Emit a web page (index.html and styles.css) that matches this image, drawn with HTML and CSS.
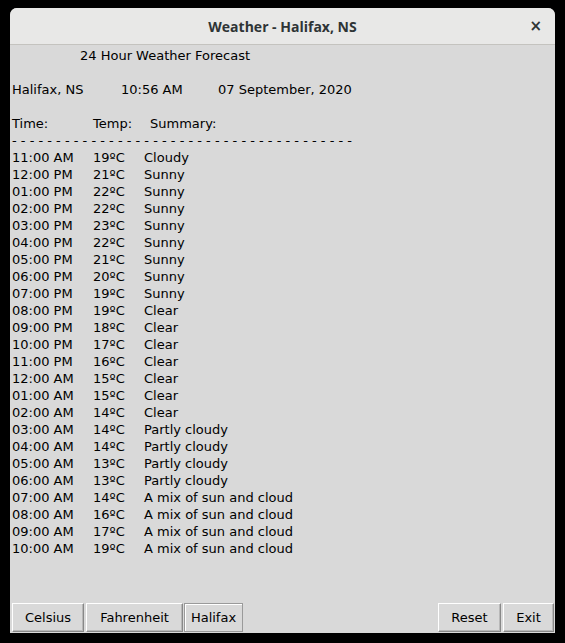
FILE: index.html
```html
<!DOCTYPE html>
<html>
<head>
<meta charset="utf-8">
<title>Weather - Halifax, NS</title>
<link rel="stylesheet" href="styles.css">
</head>
<body>
<div class="window">
  <div class="titlebar">
    <span class="title">Weather - Halifax, NS</span>
    <span class="close">×</span>
  </div>
  <div class="content">
    <div class="line heading">24 Hour Weather Forecast</div>
    <div class="line"></div>
    <div class="line info"><span class="c-loc">Halifax, NS</span><span class="c-time">10:56 AM</span><span>07 September, 2020</span></div>
    <div class="line"></div>
    <div class="line hdr"><span class="c-t">Time:</span><span class="c-h2">Temp:</span><span>Summary:</span></div>
    <div class="line dashes">- - - - - - - - - - - - - - - - - - - - - - - - - - - - - - - - - - - - - - -</div>
    <div class="line row"><span class="c-t">11:00 AM</span><span class="c-d">19ºC</span><span>Cloudy</span></div>
    <div class="line row"><span class="c-t">12:00 PM</span><span class="c-d">21ºC</span><span>Sunny</span></div>
    <div class="line row"><span class="c-t">01:00 PM</span><span class="c-d">22ºC</span><span>Sunny</span></div>
    <div class="line row"><span class="c-t">02:00 PM</span><span class="c-d">22ºC</span><span>Sunny</span></div>
    <div class="line row"><span class="c-t">03:00 PM</span><span class="c-d">23ºC</span><span>Sunny</span></div>
    <div class="line row"><span class="c-t">04:00 PM</span><span class="c-d">22ºC</span><span>Sunny</span></div>
    <div class="line row"><span class="c-t">05:00 PM</span><span class="c-d">21ºC</span><span>Sunny</span></div>
    <div class="line row"><span class="c-t">06:00 PM</span><span class="c-d">20ºC</span><span>Sunny</span></div>
    <div class="line row"><span class="c-t">07:00 PM</span><span class="c-d">19ºC</span><span>Sunny</span></div>
    <div class="line row"><span class="c-t">08:00 PM</span><span class="c-d">19ºC</span><span>Clear</span></div>
    <div class="line row"><span class="c-t">09:00 PM</span><span class="c-d">18ºC</span><span>Clear</span></div>
    <div class="line row"><span class="c-t">10:00 PM</span><span class="c-d">17ºC</span><span>Clear</span></div>
    <div class="line row"><span class="c-t">11:00 PM</span><span class="c-d">16ºC</span><span>Clear</span></div>
    <div class="line row"><span class="c-t">12:00 AM</span><span class="c-d">15ºC</span><span>Clear</span></div>
    <div class="line row"><span class="c-t">01:00 AM</span><span class="c-d">15ºC</span><span>Clear</span></div>
    <div class="line row"><span class="c-t">02:00 AM</span><span class="c-d">14ºC</span><span>Clear</span></div>
    <div class="line row"><span class="c-t">03:00 AM</span><span class="c-d">14ºC</span><span>Partly cloudy</span></div>
    <div class="line row"><span class="c-t">04:00 AM</span><span class="c-d">14ºC</span><span>Partly cloudy</span></div>
    <div class="line row"><span class="c-t">05:00 AM</span><span class="c-d">13ºC</span><span>Partly cloudy</span></div>
    <div class="line row"><span class="c-t">06:00 AM</span><span class="c-d">13ºC</span><span>Partly cloudy</span></div>
    <div class="line row"><span class="c-t">07:00 AM</span><span class="c-d">14ºC</span><span>A mix of sun and cloud</span></div>
    <div class="line row"><span class="c-t">08:00 AM</span><span class="c-d">16ºC</span><span>A mix of sun and cloud</span></div>
    <div class="line row"><span class="c-t">09:00 AM</span><span class="c-d">17ºC</span><span>A mix of sun and cloud</span></div>
    <div class="line row"><span class="c-t">10:00 AM</span><span class="c-d">19ºC</span><span>A mix of sun and cloud</span></div>
  </div>
  <div class="footer">
    <button class="btn b-cel">Celsius</button>
    <button class="btn b-fah">Fahrenheit</button>
    <button class="btn b-hal">Halifax</button>
    <span class="spacer"></span>
    <button class="btn b-res">Reset</button>
    <button class="btn b-exit">Exit</button>
  </div>
</div>
</body>
</html>
```

FILE: styles.css
```css
html, body {
  margin: 0;
  padding: 0;
  background: #000;
}
body {
  font-family: "DejaVu Sans", sans-serif;
  font-size: 13px;
  color: #000;
}
.window {
  margin: 8px 0 0 10px;
  width: 545px;
  height: 625px;
  background: #d9d9d9;
  border-radius: 7px 7px 0 0;
  display: flex;
  flex-direction: column;
  overflow: hidden;
}
.titlebar {
  height: 36px;
  flex: none;
  background: #e8e8e7;
  border-bottom: 1px solid #c4c3bf;
  display: flex;
  align-items: center;
  justify-content: center;
  position: relative;
}
.title {
  font-family: "Open Sans", "DejaVu Sans", sans-serif;
  font-weight: 700;
  font-size: 14px;
  color: #2e3436;
}
.close {
  position: absolute;
  right: 13px;
  top: 8px;
  font-family: "DejaVu Sans", sans-serif;
  font-size: 15px;
  font-weight: 700;
  color: #2e3436;
  line-height: 20px;
}
.content {
  flex: 1;
  padding: 2px 0 0 2px;
}
.line {
  height: 17px;
  line-height: 17px;
  white-space: pre;
  display: flex;
}
.heading { padding-left: 68px; }
.c-loc { width: 109px; }
.c-time { width: 97px; }
.c-t { width: 81px; }
.c-h2 { width: 57px; }
.c-d { width: 51px; }
.footer {
  flex: none;
  display: flex;
  align-items: flex-end;
  padding: 0 1px 1px 2px;
}
.spacer { flex: 1; }
.btn {
  font-family: "DejaVu Sans", sans-serif;
  font-size: 13px;
  color: #000;
  background: #d9d9d9;
  height: 29px;
  padding: 0;
  border: 1px solid;
  border-color: #fff #888 #888 #fff;
  box-shadow: inset -1px -1px 0 #b8b8b8;
}
.b-cel { width: 72px; margin-right: 2px; }
.b-fah { width: 97px; margin-right: 1px; }
.b-hal {
  width: 59px;
  border-color: #9a9a9a;
  box-shadow: inset 1px 1px 0 #fff;
}
.b-res { width: 63px; margin-right: 2px; }
.b-exit { width: 51px; }
```
